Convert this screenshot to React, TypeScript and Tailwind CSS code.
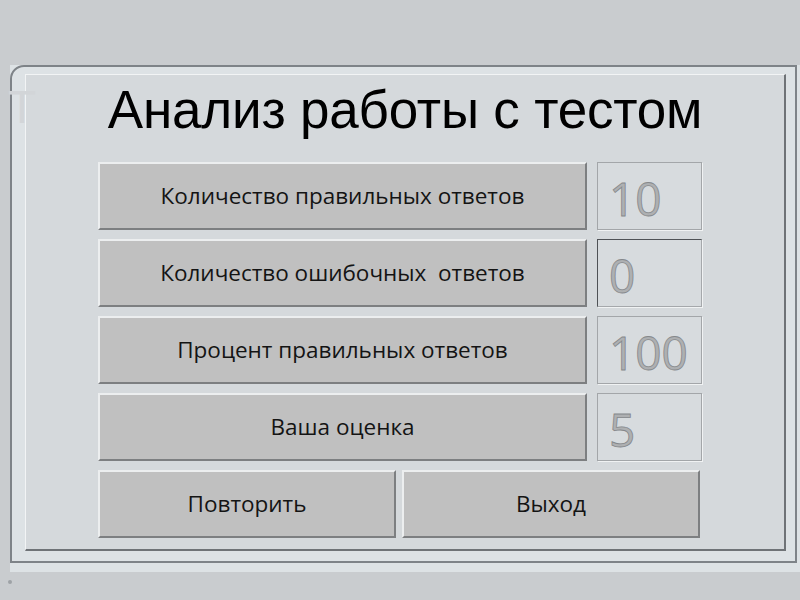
const rows = [
  { label: "Количество правильных ответов", value: "10", sunken: false },
  { label: "Количество ошибочных  ответов", value: "0", sunken: true },
  { label: "Процент правильных ответов", value: "100", sunken: false },
  { label: "Ваша оценка", value: "5", sunken: false },
];

const btn =
  "flex items-center justify-center bg-[#c0c0c0] border-t-2 border-l-2 border-b-2 border-r-2 border-t-[#eceeef] border-l-[#eceeef] border-b-[#7d7f81] border-r-[#7d7f81] text-[#141414] text-[22.5px] font-medium font-['Open_Sans',sans-serif] whitespace-pre";

export default function App() {
  return (
    <div className="relative w-[800px] h-[600px] bg-[#c9cccf] overflow-hidden pt-[65px] pl-[10px]">
      <div className="w-[790px] h-[507px] bg-[#dde2e5]">
        <div className="w-[787px] h-[498px] border-2 border-[#7e8388] rounded-tl-[14px] bg-[#dde2e5] pt-[7px] pl-[13px]">
          <div className="w-[761px] h-[477px] bg-[#d5d9dc] border-t border-l border-t-[#f2f4f5] border-l-[#f2f4f5] border-b-2 border-r-2 border-b-[#6f7377] border-r-[#6f7377] flex flex-col">
            <h1 className="self-center pt-[5px] text-[53px] leading-[60px] text-black font-['Liberation_Sans',Arial,sans-serif] tracking-[-0.2px]">
              Анализ работы с тестом
            </h1>
            <div className="mt-[22px] ml-[72px] flex flex-col gap-[9px] w-[604px]">
              {rows.map((r) => (
                <div key={r.label} className="flex gap-[10px] h-[68px]">
                  <div className={btn + " w-[489px]"}>{r.label}</div>
                  <div
                    className={
                      "w-[105px] flex items-center pl-[11px] bg-[#d7dbde] border " +
                      (r.sunken
                        ? "border-t-[#4f5256] border-l-[#4f5256] border-b-[#a5a8ab] border-r-[#a5a8ab] shadow-[1px_1px_0_#f0f2f3]"
                        : "border-[#a3a6a9] shadow-[1px_1px_0_#f0f2f3]")
                    }
                  >
                    <span className="text-[46px] leading-none pt-[4px] text-[#aeb0b2] font-['Open_Sans',sans-serif] [-webkit-text-stroke:0.8px_#85888b]">
                      {r.value}
                    </span>
                  </div>
                </div>
              ))}
              <div className="flex gap-[6px] h-[68px]">
                <div className={btn + " w-[298px]"}>Повторить</div>
                <div className={btn + " w-[298px]"}>Выход</div>
              </div>
            </div>
          </div>
        </div>
      </div>
      <span className="absolute left-[8px] top-[84px] text-[46px] leading-none text-[#d2d5d8] font-['Liberation_Sans',Arial,sans-serif]">
        Т
      </span>
      <div className="absolute left-[8px] top-[580px] w-[4px] h-[4px] rounded-full bg-[#9ea2a6]" />
    </div>
  );
}
